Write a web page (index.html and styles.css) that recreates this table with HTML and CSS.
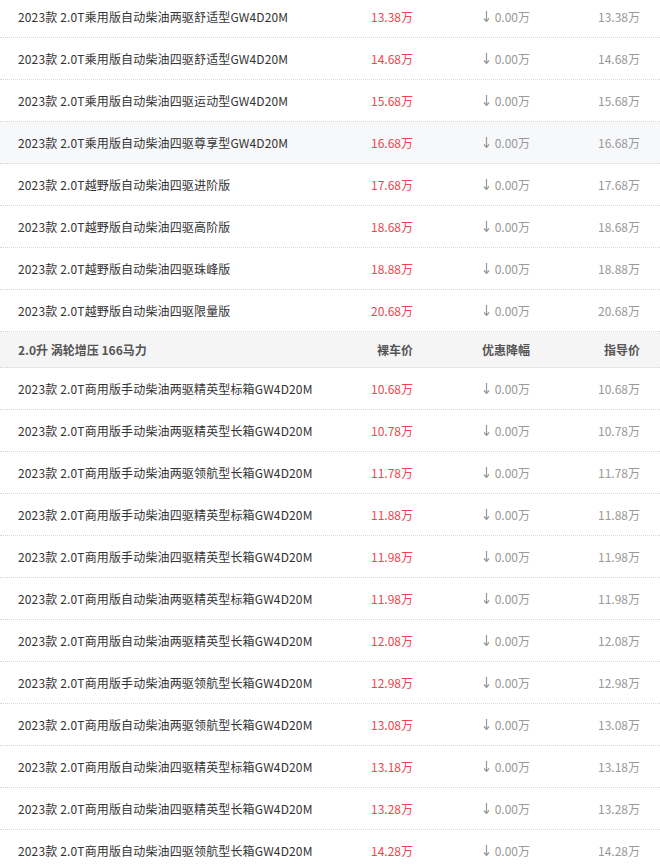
FILE: index.html
```html
<!DOCTYPE html>
<html lang="zh-CN">
<head>
<meta charset="utf-8">
<title>车型报价</title>
<link rel="stylesheet" href="styles.css">
</head>
<body>
<div class="list">
  <div class="row"><span class="name">2023款 2.0T乘用版自动柴油两驱舒适型GW4D20M</span><span class="price">13.38万</span><span class="disc"><svg class="arrow" viewBox="0 0 7 11"><path d="M3.5 0V10M1 7.5L3.5 10.5L6 7.5" fill="none" stroke="#999" stroke-width="1.2"/></svg>0.00万</span><span class="guide">13.38万</span></div>
  <div class="row"><span class="name">2023款 2.0T乘用版自动柴油四驱舒适型GW4D20M</span><span class="price">14.68万</span><span class="disc"><svg class="arrow" viewBox="0 0 7 11"><path d="M3.5 0V10M1 7.5L3.5 10.5L6 7.5" fill="none" stroke="#999" stroke-width="1.2"/></svg>0.00万</span><span class="guide">14.68万</span></div>
  <div class="row"><span class="name">2023款 2.0T乘用版自动柴油四驱运动型GW4D20M</span><span class="price">15.68万</span><span class="disc"><svg class="arrow" viewBox="0 0 7 11"><path d="M3.5 0V10M1 7.5L3.5 10.5L6 7.5" fill="none" stroke="#999" stroke-width="1.2"/></svg>0.00万</span><span class="guide">15.68万</span></div>
  <div class="row hl"><span class="name">2023款 2.0T乘用版自动柴油四驱尊享型GW4D20M</span><span class="price">16.68万</span><span class="disc"><svg class="arrow" viewBox="0 0 7 11"><path d="M3.5 0V10M1 7.5L3.5 10.5L6 7.5" fill="none" stroke="#999" stroke-width="1.2"/></svg>0.00万</span><span class="guide">16.68万</span></div>
  <div class="row"><span class="name">2023款 2.0T越野版自动柴油四驱进阶版</span><span class="price">17.68万</span><span class="disc"><svg class="arrow" viewBox="0 0 7 11"><path d="M3.5 0V10M1 7.5L3.5 10.5L6 7.5" fill="none" stroke="#999" stroke-width="1.2"/></svg>0.00万</span><span class="guide">17.68万</span></div>
  <div class="row"><span class="name">2023款 2.0T越野版自动柴油四驱高阶版</span><span class="price">18.68万</span><span class="disc"><svg class="arrow" viewBox="0 0 7 11"><path d="M3.5 0V10M1 7.5L3.5 10.5L6 7.5" fill="none" stroke="#999" stroke-width="1.2"/></svg>0.00万</span><span class="guide">18.68万</span></div>
  <div class="row"><span class="name">2023款 2.0T越野版自动柴油四驱珠峰版</span><span class="price">18.88万</span><span class="disc"><svg class="arrow" viewBox="0 0 7 11"><path d="M3.5 0V10M1 7.5L3.5 10.5L6 7.5" fill="none" stroke="#999" stroke-width="1.2"/></svg>0.00万</span><span class="guide">18.88万</span></div>
  <div class="row"><span class="name">2023款 2.0T越野版自动柴油四驱限量版</span><span class="price">20.68万</span><span class="disc"><svg class="arrow" viewBox="0 0 7 11"><path d="M3.5 0V10M1 7.5L3.5 10.5L6 7.5" fill="none" stroke="#999" stroke-width="1.2"/></svg>0.00万</span><span class="guide">20.68万</span></div>
  <div class="row head"><span class="name">2.0升 涡轮增压 166马力</span><span class="price">裸车价</span><span class="disc">优惠降幅</span><span class="guide">指导价</span></div>
  <div class="row"><span class="name">2023款 2.0T商用版手动柴油两驱精英型标箱GW4D20M</span><span class="price">10.68万</span><span class="disc"><svg class="arrow" viewBox="0 0 7 11"><path d="M3.5 0V10M1 7.5L3.5 10.5L6 7.5" fill="none" stroke="#999" stroke-width="1.2"/></svg>0.00万</span><span class="guide">10.68万</span></div>
  <div class="row"><span class="name">2023款 2.0T商用版手动柴油两驱精英型长箱GW4D20M</span><span class="price">10.78万</span><span class="disc"><svg class="arrow" viewBox="0 0 7 11"><path d="M3.5 0V10M1 7.5L3.5 10.5L6 7.5" fill="none" stroke="#999" stroke-width="1.2"/></svg>0.00万</span><span class="guide">10.78万</span></div>
  <div class="row"><span class="name">2023款 2.0T商用版手动柴油两驱领航型长箱GW4D20M</span><span class="price">11.78万</span><span class="disc"><svg class="arrow" viewBox="0 0 7 11"><path d="M3.5 0V10M1 7.5L3.5 10.5L6 7.5" fill="none" stroke="#999" stroke-width="1.2"/></svg>0.00万</span><span class="guide">11.78万</span></div>
  <div class="row"><span class="name">2023款 2.0T商用版手动柴油四驱精英型标箱GW4D20M</span><span class="price">11.88万</span><span class="disc"><svg class="arrow" viewBox="0 0 7 11"><path d="M3.5 0V10M1 7.5L3.5 10.5L6 7.5" fill="none" stroke="#999" stroke-width="1.2"/></svg>0.00万</span><span class="guide">11.88万</span></div>
  <div class="row"><span class="name">2023款 2.0T商用版手动柴油四驱精英型长箱GW4D20M</span><span class="price">11.98万</span><span class="disc"><svg class="arrow" viewBox="0 0 7 11"><path d="M3.5 0V10M1 7.5L3.5 10.5L6 7.5" fill="none" stroke="#999" stroke-width="1.2"/></svg>0.00万</span><span class="guide">11.98万</span></div>
  <div class="row"><span class="name">2023款 2.0T商用版自动柴油两驱精英型标箱GW4D20M</span><span class="price">11.98万</span><span class="disc"><svg class="arrow" viewBox="0 0 7 11"><path d="M3.5 0V10M1 7.5L3.5 10.5L6 7.5" fill="none" stroke="#999" stroke-width="1.2"/></svg>0.00万</span><span class="guide">11.98万</span></div>
  <div class="row"><span class="name">2023款 2.0T商用版自动柴油两驱精英型长箱GW4D20M</span><span class="price">12.08万</span><span class="disc"><svg class="arrow" viewBox="0 0 7 11"><path d="M3.5 0V10M1 7.5L3.5 10.5L6 7.5" fill="none" stroke="#999" stroke-width="1.2"/></svg>0.00万</span><span class="guide">12.08万</span></div>
  <div class="row"><span class="name">2023款 2.0T商用版手动柴油两驱领航型长箱GW4D20M</span><span class="price">12.98万</span><span class="disc"><svg class="arrow" viewBox="0 0 7 11"><path d="M3.5 0V10M1 7.5L3.5 10.5L6 7.5" fill="none" stroke="#999" stroke-width="1.2"/></svg>0.00万</span><span class="guide">12.98万</span></div>
  <div class="row"><span class="name">2023款 2.0T商用版自动柴油两驱领航型长箱GW4D20M</span><span class="price">13.08万</span><span class="disc"><svg class="arrow" viewBox="0 0 7 11"><path d="M3.5 0V10M1 7.5L3.5 10.5L6 7.5" fill="none" stroke="#999" stroke-width="1.2"/></svg>0.00万</span><span class="guide">13.08万</span></div>
  <div class="row"><span class="name">2023款 2.0T商用版自动柴油四驱精英型标箱GW4D20M</span><span class="price">13.18万</span><span class="disc"><svg class="arrow" viewBox="0 0 7 11"><path d="M3.5 0V10M1 7.5L3.5 10.5L6 7.5" fill="none" stroke="#999" stroke-width="1.2"/></svg>0.00万</span><span class="guide">13.18万</span></div>
  <div class="row"><span class="name">2023款 2.0T商用版自动柴油四驱精英型长箱GW4D20M</span><span class="price">13.28万</span><span class="disc"><svg class="arrow" viewBox="0 0 7 11"><path d="M3.5 0V10M1 7.5L3.5 10.5L6 7.5" fill="none" stroke="#999" stroke-width="1.2"/></svg>0.00万</span><span class="guide">13.28万</span></div>
  <div class="row"><span class="name">2023款 2.0T商用版自动柴油四驱领航型长箱GW4D20M</span><span class="price">14.28万</span><span class="disc"><svg class="arrow" viewBox="0 0 7 11"><path d="M3.5 0V10M1 7.5L3.5 10.5L6 7.5" fill="none" stroke="#999" stroke-width="1.2"/></svg>0.00万</span><span class="guide">14.28万</span></div>
</div>
</body>
</html>
```
FILE: styles.css
```css
html, body {
  margin: 0;
  padding: 0;
  background: #fff;
}
body {
  font-family: "Noto Sans CJK SC", "Noto Sans", sans-serif;
  font-size: 12px;
  color: #333;
  overflow: hidden;
}
.list {
  margin-top: -4px;
}
.row {
  display: grid;
  grid-template-columns: 1fr 100px 117px 110px;
  align-items: center;
  height: 41px;
  padding: 0 20px 0 18px;
  border-bottom: 1px dotted #d6d6d6;
}
.row.hl {
  background: #f7f8fa;
}
.row.head {
  height: 35px;
  background: #f5f5f5;
  font-weight: bold;
  color: #555;
}
.name {
  white-space: nowrap;
  letter-spacing: 0.15px;
}
.row.head .name {
  letter-spacing: 0;
}
.price {
  text-align: right;
  color: #e8474f;
}
.disc, .guide {
  text-align: right;
  color: #999;
}
.row.head .price, .row.head .disc, .row.head .guide {
  color: #555;
}
.disc {
  display: flex;
  justify-content: flex-end;
  align-items: center;
}
.arrow {
  width: 7px;
  height: 11px;
  margin-right: 5px;
}
```
